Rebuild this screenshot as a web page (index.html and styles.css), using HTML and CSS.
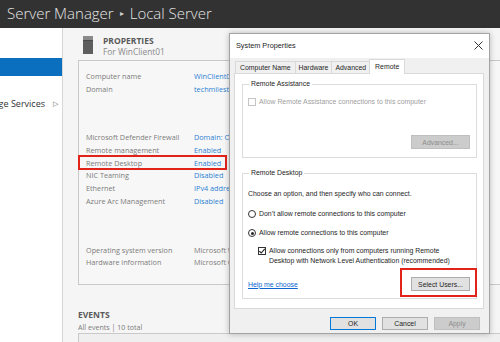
FILE: index.html
```html
<!DOCTYPE html>
<html>
<head>
<meta charset="utf-8">
<link rel="stylesheet" href="styles.css">
</head>
<body>
<div class="app">
  <header class="topbar">
    <span>Server Manager</span><span class="sep">&#9656;</span><span>Local Server</span>
  </header>
  <div class="workspace">
    <nav class="nav">
      <div class="nav-item"></div>
      <div class="nav-item active"></div>
      <div class="nav-item"></div>
      <div class="nav-item"><span class="nav-text">File and Storage Services</span><span class="nav-arrow">&#9655;</span></div>
    </nav>
    <main class="main">
      <section class="props">
        <div class="props-head">
          <svg class="server-icon" width="10" height="18" viewBox="0 0 10 18">
            <rect x="0" y="0" width="10" height="18" fill="#5e5e5e"/>
            <rect x="0" y="0" width="10" height="4" fill="#8a8a8a"/>
            <rect x="0" y="4" width="10" height="1" fill="#4a4a4a"/>
          </svg>
          <div class="head-text">
            <div class="head-title">PROPERTIES</div>
            <div class="head-sub">For WinClient01</div>
          </div>
        </div>
        <div class="props-box">
          <div class="group">
            <div class="row"><span class="label">Computer name</span><span class="value">WinClient01</span></div>
            <div class="row"><span class="label">Domain</span><span class="value">techmilestone.local</span></div>
          </div>
          <div class="group">
            <div class="row"><span class="label">Microsoft Defender Firewall</span><span class="value">Domain: On</span></div>
            <div class="row"><span class="label">Remote management</span><span class="value">Enabled</span></div>
            <div class="row hl"><span class="label">Remote Desktop</span><span class="value">Enabled</span><span class="hl-box"></span></div>
            <div class="row"><span class="label">NIC Teaming</span><span class="value">Disabled</span></div>
            <div class="row"><span class="label">Ethernet</span><span class="value">IPv4 address assigned by DHCP</span></div>
            <div class="row"><span class="label">Azure Arc Management</span><span class="value">Disabled</span></div>
          </div>
          <div class="group">
            <div class="row"><span class="label">Operating system version</span><span class="value plain">Microsoft Windows Server</span></div>
            <div class="row"><span class="label">Hardware information</span><span class="value plain">Microsoft Corporation</span></div>
          </div>
        </div>
      </section>
      <section class="events">
        <div class="head-title">EVENTS</div>
        <div class="events-sub">All events | 10 total</div>
        <div class="events-box"></div>
      </section>
    </main>
  </div>

  <div class="dialog">
    <div class="dlg-title">
      <span>System Properties</span>
      <svg class="dlg-close" width="9" height="9" viewBox="0 0 9 9"><path d="M0.5 0.5L8.5 8.5M8.5 0.5L0.5 8.5" stroke="#333" stroke-width="1"/></svg>
    </div>
    <div class="dlg-body">
      <div class="tabs">
        <div class="tab">Computer Name</div>
        <div class="tab">Hardware</div>
        <div class="tab">Advanced</div>
        <div class="tab sel">Remote</div>
      </div>
      <div class="tab-page">
        <fieldset class="grp grp-ra">
          <legend>Remote Assistance</legend>
          <div class="opt disabled"><span class="cb"></span><span>Allow Remote Assistance connections to this computer</span></div>
          <div class="btn-row"><span class="btn disabled">Advanced...</span></div>
        </fieldset>
        <fieldset class="grp grp-rd">
          <legend>Remote Desktop</legend>
          <div class="intro">Choose an option, and then specify who can connect.</div>
          <div class="opt r1"><span class="rb"></span><span>Don’t allow remote connections to this computer</span></div>
          <div class="opt r2"><span class="rb on"></span><span>Allow remote connections to this computer</span></div>
          <div class="opt nla"><span class="cb on"><svg width="8" height="8" viewBox="0 0 8 8"><path d="M1.3 4.1L3.2 6L6.8 1.8" fill="none" stroke="#222" stroke-width="1.1"/></svg></span><span>Allow connections only from computers running Remote<br>Desktop with Network Level Authentication (recommended)</span></div>
          <div class="rd-foot">
            <span class="link">Help me choose</span>
            <span class="btn su">Select Users...<span class="hl-box2"></span></span>
          </div>
        </fieldset>
      </div>
      <div class="dlg-buttons">
        <span class="btn def">OK</span>
        <span class="btn">Cancel</span>
        <span class="btn disabled">Apply</span>
      </div>
    </div>
  </div>
</div>
</body>
</html>
```
FILE: styles.css
```css
* { box-sizing: border-box; margin: 0; padding: 0; }
html, body { width: 500px; height: 342px; overflow: hidden; }
body { font-family: "Open Sans", "Noto Sans", sans-serif; background: #f5f5f5; }
.app { position: relative; display: flex; flex-direction: column; height: 342px; }

.topbar { height: 28px; flex: none; background: #323232; color: #e6e6e6; font-size: 15px; font-weight: 300; display: flex; align-items: center; gap: 6px; padding: 0 0 3px 7px; white-space: nowrap; }
.sep { font-size: 8px; color: #d0d0d0; }

.workspace { flex: 1; display: flex; min-height: 0; }
.nav { width: 63px; flex: none; background: #fff; border-right: 1px solid #d6d6d6; overflow: hidden; padding-top: 12px; }
.nav-item { height: 18px; display: flex; align-items: center; justify-content: flex-end; padding-right: 4px; font-size: 9px; color: #333; white-space: nowrap; overflow: hidden; }
.nav-item.active { background: #0b6fc0; }
.nav-text { flex-shrink: 0; }
.nav-arrow { flex-shrink: 0; font-size: 7px; margin-left: 8px; color: #555; }

.main { flex: 1; overflow: hidden; padding-left: 15px; display: flex; flex-direction: column; }
.props-head { height: 32px; display: flex; align-items: flex-start; gap: 10px; padding: 8px 0 0 5px; }
.server-icon { display: block; flex: none; }
.head-title { font-size: 8.5px; font-weight: 700; color: #5a5a5a; line-height: 10px; }
.head-sub { font-size: 8.4px; color: #8a8a8a; line-height: 10px; margin-top: 1px; }

.props-box { height: 225px; margin-right: -20px; border: 1px solid #c9c9c9; background: #f7f7f7; padding: 9px 0 0 7px; display: flex; flex-direction: column; gap: 36px; }
.row { position: relative; display: flex; height: 12.7px; line-height: 12.7px; font-size: 7.25px; white-space: nowrap; }
.label { width: 108px; flex: none; color: #7b7b7b; }
.value { color: #2b7fd3; }
.value.plain { color: #7b7b7b; }
.hl-box { position: absolute; left: -8px; top: -1.5px; width: 149px; height: 15px; border: 2px solid #e2231a; }

.events { padding-top: 25px; }
.events-sub { font-size: 7.1px; color: #7b7b7b; line-height: 10px; margin-top: 2px; }
.events-box { height: 30px; margin-top: 1px; margin-right: -20px; border: 1px solid #c9c9c9; background: #efefef; }

.dialog { position: absolute; left: 229px; top: 33px; width: 261px; height: 301px; border: 1px solid #a3a3a3; box-shadow: 0 0 6px rgba(0,0,0,0.25); background: #f0f0f0; font-family: "Liberation Sans", Arial, sans-serif; font-size: 6.9px; color: #1e1e1e; display: flex; flex-direction: column; }
.dlg-title { height: 24px; flex: none; background: #fff; display: flex; align-items: center; justify-content: space-between; padding: 0 6px 1px 6px; font-size: 7.3px; }
.dlg-close { display: block; }
.dlg-body { flex: 1; display: flex; flex-direction: column; padding: 1px 5px 0 4px; }
.tabs { height: 14px; display: flex; align-items: flex-end; padding-left: 1px; position: relative; z-index: 1; }
.tab { height: 12px; line-height: 11px; padding: 0 3px; border: 1px solid #d9d9d9; border-bottom: none; margin-right: -1px; background: #f0f0f0; white-space: nowrap; }
.tab:first-child { padding: 0 4px; }
.tab.sel { height: 15px; margin-bottom: -1px; background: #fff; padding: 0 5px; line-height: 13px; }
.tab-page { height: 236px; flex: none; background: #fff; border: 1px solid #d9d9d9; padding: 5px 6px 0 7px; display: flex; flex-direction: column; }

.grp { border: 1px solid #dcdcdc; padding: 0 0 0 5px; }
.grp legend { margin-left: 1px; padding: 0 2px; line-height: 10px; }
.grp-ra { height: 79px; }
.grp-rd { height: 131px; margin-top: 10px; }
.opt { display: flex; align-items: flex-start; gap: 3px; line-height: 10px; white-space: nowrap; }
.opt.disabled { color: #a0a0a0; margin-top: 8px; }
.cb { width: 8px; height: 8px; flex: none; margin-top: 1px; border: 1px solid #333; background: #fff; display: block; }
.cb svg { display: block; margin: -1px; }
.opt.disabled .cb { border-color: #c4c4c4; }
.rb { width: 8px; height: 8px; flex: none; margin-top: 1px; border: 1px solid #333; border-radius: 50%; background: #fff; position: relative; }
.rb.on::after { content: ""; position: absolute; left: 1.5px; top: 1.5px; width: 3px; height: 3px; border-radius: 50%; background: #222; }
.btn-row { display: flex; justify-content: flex-end; padding-right: 6px; margin-top: 28px; }
.btn { display: inline-flex; align-items: center; justify-content: center; height: 14px; border: 1px solid #adadad; background: #e1e1e1; color: #1e1e1e; position: relative; white-space: nowrap; }
.btn-row .btn, .btn.su { width: 59px; }
.btn.disabled { background: #cccccc; border-color: #bfbfbf; color: #8c8c8c; }
.intro { line-height: 10px; margin-top: 11px; }
.opt.r1 { margin-top: 10px; }
.opt.r2 { margin-top: 9px; }
.opt.nla { margin-top: 8px; padding-left: 10px; line-height: 9.5px; }
.opt.nla .cb { margin-top: 0.5px; }
.rd-foot { display: flex; justify-content: space-between; align-items: center; padding-right: 6px; margin-top: 12px; }
.link { color: #0b66d0; text-decoration: underline; }
.hl-box2 { position: absolute; left: -12px; top: -10px; width: 77px; height: 29px; border: 2px solid #e2231a; }

.dlg-buttons { display: flex; justify-content: flex-end; gap: 6px; padding: 8px 4px 0 0; }
.dlg-buttons .btn { width: 46px; height: 13px; }
.btn.def { border-color: #0078d7; }
```
